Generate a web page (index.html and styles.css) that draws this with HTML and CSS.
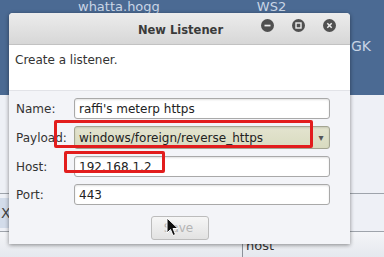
FILE: index.html
```html
<!DOCTYPE html>
<html lang="en">
<head>
  <meta charset="UTF-8">
  <title>New Listener</title>
  <link rel="stylesheet" href="styles.css">
</head>
<body>
  <!-- fondo: escritorio y tabla -->
  <div class="desk">
    <div class="desk-top">
      <span class="host-name">whatta.hogg</span>
      <span class="host-os">WS2</span>
    </div>
    <div class="desk-gk">GK</div>
  </div>
  <div class="table">
    <div class="row row-a"></div>
    <div class="row row-b"><span class="tab-x">X</span></div>
    <div class="row row-c">
      <span class="col-gap"></span>
      <span class="col-host">host</span>
    </div>
  </div>

  <!-- ventana -->
  <div class="dialog">
    <div class="titlebar">
      <span class="title">New Listener</span>
      <div class="controls">
        <span class="ctl">
          <svg width="13" height="13" viewBox="0 0 13 13"><circle cx="6.5" cy="6.5" r="6.5" fill="#505050"/><rect x="3.5" y="5.7" width="6" height="1.7" fill="#eee"/></svg>
        </span>
        <span class="ctl">
          <svg width="13" height="13" viewBox="0 0 13 13"><circle cx="6.5" cy="6.5" r="6.5" fill="#505050"/><rect x="4" y="4" width="5" height="5" fill="none" stroke="#eee" stroke-width="1.4"/></svg>
        </span>
        <span class="ctl">
          <svg width="13" height="13" viewBox="0 0 13 13"><circle cx="6.5" cy="6.5" r="6.5" fill="#505050"/><path d="M4.3 4.3 L8.7 8.7 M8.7 4.3 L4.3 8.7" stroke="#eee" stroke-width="1.5"/></svg>
        </span>
      </div>
    </div>
    <div class="intro">Create a listener.</div>
    <div class="form">
      <label>Name:</label>
      <div class="field">raffi's meterp https</div>
      <label>Payload:</label>
      <div class="field combo">windows/foreign/reverse_https<span class="arrow">▾</span></div>
      <label>Host:</label>
      <div class="field">192.168.1.2</div>
      <label>Port:</label>
      <div class="field">443</div>
    </div>
    <div class="actions">
      <button class="save" disabled>Save</button>
    </div>
  </div>

  <!-- marcas rojas -->
  <div class="mark mark-payload"></div>
  <div class="mark mark-host"></div>

  <svg class="cursor" width="14" height="20" viewBox="0 0 14 20">
    <path d="M1 1 L1 16 L4.5 12.5 L7 18.5 L9.5 17.5 L7 11.5 L12 11.5 Z" fill="#111" stroke="#fff" stroke-width="1"/>
  </svg>
</body>
</html>
```

FILE: styles.css
```css
body {
  margin: 0;
  width: 384px;
  height: 257px;
  overflow: hidden;
  position: relative;
  background: #eef0f6;
  font-family: "DejaVu Sans", sans-serif;
  font-size: 12px;
  color: #333;
}

/* fondo */
.desk {
  height: 95px;
  background: #4b6a93;
  color: #c9d5e6;
  font-size: 13px;
}
.desk-top {
  display: flex;
  padding-left: 78px;
  line-height: 13px;
  height: 14px;
}
.host-os { margin-left: 97px; }
.desk-gk {
  margin: 24px 0 0 351px;
  font-size: 14px;
}

.row { border-bottom: 1px solid #9ea3ab; }
.row-a { height: 98px; }
.row-b { height: 37px; display: flex; align-items: center; }
.tab-x {
  width: 10px;
  height: 30px;
  line-height: 30px;
  background: #d3dcea;
  color: #444;
  font-size: 14px;
  padding-left: 1px;
}
.row-c {
  display: flex;
  height: 25px;
  border: 0;
  background: linear-gradient(#f4f5f8, #e5e8ee);
}
.col-gap { width: 242px; border-right: 1px solid #8d9199; }
.col-host { padding: 6px 0 0 3px; font-size: 13px; color: #333; }

/* ventana */
.dialog {
  position: absolute;
  left: 9px;
  top: 13px;
  width: 341px;
  height: 231px;
  background: #f3f4f8;
  border-radius: 4px 4px 0 0;
  box-shadow: 0 1px 4px rgba(0, 0, 0, 0.45);
  display: flex;
  flex-direction: column;
}
.titlebar {
  height: 31px;
  display: flex;
  align-items: center;
  border-radius: 4px 4px 0 0;
  background: linear-gradient(#ececec, #d7d7d7);
  border-bottom: 1px solid #c2c2c2;
  position: relative;
}
.title {
  flex: 1;
  text-align: center;
  font-weight: bold;
  font-size: 11.5px;
  color: #3a3a3a;
  padding: 3px 0 0 2px;
}
.controls {
  position: absolute;
  right: 14px;
  top: 6px;
  display: flex;
  gap: 18px;
}
.ctl { display: block; height: 13px; }

.intro {
  background: #fff;
  height: 46px;
  padding: 8px 0 0 6px;
  box-sizing: border-box;
  border-bottom: 1px solid #e2e3e8;
  color: #333;
}

.form {
  display: grid;
  grid-template-columns: 58px 256px;
  row-gap: 7px;
  padding: 7px 0 0 7px;
  align-items: center;
}
.form label { color: #333; }
.field {
  height: 21px;
  box-sizing: border-box;
  border: 1px solid #a9a9a9;
  border-radius: 3px;
  background: #fff;
  box-shadow: inset 0 1px 2px rgba(0, 0, 0, 0.12);
  padding: 3px 0 0 4px;
  color: #222;
  white-space: nowrap;
}
.combo {
  height: 23px;
  padding-top: 4px;
  background: linear-gradient(#e3e4cf, #d9dbc0);
  border-color: #a4a592;
  position: relative;
}
.arrow {
  position: absolute;
  right: 0;
  top: 0;
  width: 16px;
  height: 21px;
  line-height: 21px;
  text-align: center;
  font-size: 10px;
  color: #555;
}

.actions {
  display: flex;
  justify-content: center;
  padding-top: 11px;
}
.save {
  width: 58px;
  height: 24px;
  border: 1px solid #bcbcbc;
  border-radius: 3px;
  background: linear-gradient(#f6f6f6, #e2e2e2);
  font-family: "DejaVu Sans", sans-serif;
  font-size: 12px;
  color: #b4b4b4;
  padding-left: 4px;
}

/* marcas */
.mark {
  position: absolute;
  border: 3px solid #e21d1d;
  border-radius: 2px;
}
.mark-payload { left: 54px; top: 120px; width: 253px; height: 22px; }
.mark-host { left: 64px; top: 151px; width: 95px; height: 16px; }

.cursor {
  position: absolute;
  left: 166px;
  top: 217px;
}
```
